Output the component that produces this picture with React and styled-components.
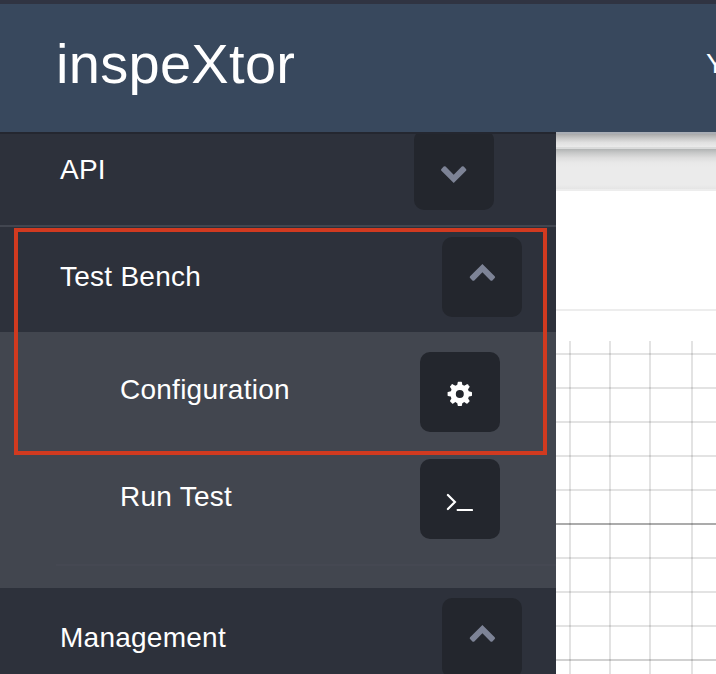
import React from "react";
import styled, { createGlobalStyle } from "styled-components";

const GlobalStyle = createGlobalStyle`
  *, *::before, *::after { box-sizing: border-box; }
  body {
    margin: 0;
    overflow: hidden;
    font-family: "Liberation Sans", Arial, sans-serif;
    color: #fff;
  }
`;

const Page = styled.div`
  display: flex;
  flex-direction: column;
  width: 716px;
  height: 674px;
  overflow: hidden;
  background: #fff;
`;

const Header = styled.header`
  display: flex;
  flex: none;
  justify-content: space-between;
  height: 132px;
  padding-left: 56px;
  border-top: 4px solid #303442;
  background: #38485d;
  overflow: hidden;
`;

const Brand = styled.h1`
  margin: 0;
  font-size: 56px;
  font-weight: 400;
  line-height: 64px;
  letter-spacing: 0.3px;
  padding-top: 28px;
`;

const Account = styled.div`
  flex: none;
  width: 10px;
  padding-top: 44px;
  font-size: 28px;
  line-height: 32px;
  white-space: nowrap;
  overflow: hidden;
`;

const Body = styled.div`
  display: flex;
  flex: 1;
  min-height: 0;
`;

const Sidebar = styled.nav`
  position: relative;
  flex: none;
  width: 556px;
  overflow: hidden;
  border-top: 2px solid #242730;
  background: #2d313b;
`;

const Row = styled.div`
  display: flex;
  justify-content: space-between;
  align-items: flex-start;
  height: ${(p) => p.$height}px;
  padding: 0 ${(p) => p.$right}px 0 ${(p) => (p.$nested ? 120 : 60)}px;
`;

const Label = styled.span`
  padding-top: ${(p) => p.$top}px;
  font-size: 28px;
  line-height: 32px;
  letter-spacing: 0.25px;
  white-space: nowrap;
`;

const IconButton = styled.button`
  display: grid;
  place-items: center;
  width: 80px;
  height: 80px;
  margin: ${(p) => p.$top}px 0 0;
  padding: 0;
  border: 0;
  border-radius: 10px;
  background: #23262d;
  color: ${(p) => (p.$muted ? "#7d8396" : "#fff")};

  svg { display: block; }
`;

const Divider = styled.div`
  height: 2px;
  background: #424650;
`;

const SubMenu = styled.div`
  height: 256px;
  padding-top: 20px;
  background: #42464f;
`;

const SubDivider = styled.div`
  height: 2px;
  margin-left: 56px;
  background: #454852;
`;

const Highlight = styled.div`
  position: absolute;
  left: 14px;
  top: 94px;
  width: 533px;
  height: 227px;
  border: 4px solid #d13a20;
  pointer-events: none;
`;

const Main = styled.main`
  flex: 1;
  display: flex;
  flex-direction: column;
  min-width: 0;
`;

const TopStrip = styled.div`
  flex: none;
  height: 17px;
  border-top: 2px solid #a9adb4;
  border-bottom: 2px solid #dadbdb;
  background: linear-gradient(#a9a9a9, #c5c5c5 30%, #e0e0e0 65%, #ebebeb);
`;

const ToolStrip = styled.div`
  flex: none;
  height: 42px;
  border-bottom: 2px solid #ededed;
  background: linear-gradient(#b1b3b3, #c8c9c9 4px, #dedede 9px, #e9e9e9 14px, #ebebeb 18px, #ebebeb 36px, #e5e5e5);
`;

const Panel = styled.div`
  flex: none;
  height: 120px;
  margin-bottom: 30px;
  border-bottom: 2px solid #ededed;
`;

const Chart = styled.svg`
  display: block;
  flex: none;
`;

const ChevronDown = () => (
  <svg width="80" height="80" viewBox="0 0 80 80" fill="currentColor">
    <path d="M39.7 53.1 L27.4 40.8 Q26.5 39.8 27.4 38.9 L29.7 36.6 Q30.7 35.7 31.6 36.6 L39.7 44.7 L47.8 36.6 Q48.7 35.7 49.7 36.6 L52 38.9 Q52.9 39.8 52 40.8 Z" />
  </svg>
);

const ChevronUp = () => (
  <svg width="80" height="80" viewBox="0 0 80 80" fill="currentColor">
    <path d="M40.4 26.9 L52.7 39.2 Q53.6 40.2 52.7 41.1 L50.4 43.4 Q49.4 44.3 48.5 43.4 L40.4 35.3 L32.3 43.4 Q31.4 44.3 30.4 43.4 L28.1 41.1 Q27.2 40.2 28.1 39.2 Z" />
  </svg>
);

const Gear = () => (
  <svg width="80" height="80" viewBox="0 0 80 80">
    <g transform="translate(39.8 41.9)" fill="currentColor">
      <circle r="6.7" fill="none" stroke="currentColor" strokeWidth="5.4" />
      {[0, 45, 90, 135, 180, 225, 270, 315].map((a) => (
        <path
          key={a}
          transform={`rotate(${a})`}
          d="M-2.8 -8 L-2 -11.8 Q-1.9 -12.2 -1.4 -12.2 L1.4 -12.2 Q1.9 -12.2 2 -11.8 L2.8 -8 Z"
        />
      ))}
    </g>
  </svg>
);

const Prompt = () => (
  <svg width="80" height="80" viewBox="0 0 80 80">
    <path d="M27.9 36 L34.9 43 L27.9 50" fill="none" stroke="currentColor" strokeWidth="2.2" strokeLinecap="round" />
    <rect x="36.7" y="50" width="16.3" height="2" rx="0.4" fill="currentColor" />
  </svg>
);

const columns = [13, 53, 93, 135];
const rows = [12, 46, 80, 114, 148, 182, 216, 250, 284, 318];
const rowShade = { 182: 0.33, 318: 0.18 };

const Grid = () => (
  <Chart width="160" height="333" viewBox="0 0 160 333">
    {columns.map((x) => (
      <rect key={x} x={x} y="0" width="2" height="333" fillOpacity="0.11" />
    ))}
    {rows.map((y) => (
      <rect key={y} x="0" y={y} width="160" height="2" fillOpacity={rowShade[y] || 0.11} />
    ))}
  </Chart>
);

export default function App() {
  return (
    <Page>
      <GlobalStyle />
      <Header>
        <Brand>inspeXtor</Brand>
        <Account>Y</Account>
      </Header>
      <Body>
        <Sidebar>
          <Row $height={91} $right={62}>
            <Label $top={20}>API</Label>
            <IconButton $top={-4} $muted aria-label="Expand API"><ChevronDown /></IconButton>
          </Row>
          <Divider />
          <Row $height={105} $right={34}>
            <Label $top={34}>Test Bench</Label>
            <IconButton $top={10} $muted aria-label="Collapse Test Bench"><ChevronUp /></IconButton>
          </Row>
          <SubMenu>
            <Row $height={107} $right={56} $nested>
              <Label $top={22}>Configuration</Label>
              <IconButton $top={0} aria-label="Configuration"><Gear /></IconButton>
            </Row>
            <Row $height={105} $right={56} $nested>
              <Label $top={22}>Run Test</Label>
              <IconButton $top={0} aria-label="Run Test"><Prompt /></IconButton>
            </Row>
            <SubDivider />
          </SubMenu>
          <Row $height={105} $right={34}>
            <Label $top={34}>Management</Label>
            <IconButton $top={10} $muted aria-label="Collapse Management"><ChevronUp /></IconButton>
          </Row>
          <Highlight />
        </Sidebar>
        <Main>
          <TopStrip />
          <ToolStrip />
          <Panel />
          <Grid />
        </Main>
      </Body>
    </Page>
  );
}
